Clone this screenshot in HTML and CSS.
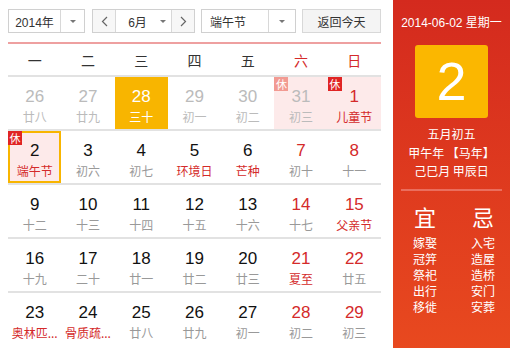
FILE: index.html
```html
<!DOCTYPE html>
<html lang="zh-CN">
<head>
    <meta charset="UTF-8">
    <title>万年历</title>
    <link rel="stylesheet" href="styles.css">
</head>
<body>
    <div class="calendar">
        <div class="main">
            <div class="toolbar">
                <div class="select year">
                    <span class="value">2014年</span>
                    <span class="drop"><i class="caret"></i></span>
                </div>
                <div class="select month">
                    <span class="nav"><svg width="7" height="11" viewBox="0 0 7 11"><path d="M6 1 L1.5 5.5 L6 10" fill="none" stroke="#666" stroke-width="1.2"/></svg></span>
                    <span class="value">6月</span>
                    <span class="drop"><i class="caret"></i></span>
                    <span class="nav"><svg width="7" height="11" viewBox="0 0 7 11"><path d="M1 1 L5.5 5.5 L1 10" fill="none" stroke="#666" stroke-width="1.2"/></svg></span>
                </div>
                <div class="select holiday">
                    <span class="value">端午节</span>
                    <span class="drop"><i class="caret"></i></span>
                </div>
                <div class="btn-today">返回今天</div>
            </div>

            <div class="weekdays">
                <span>一</span><span>二</span><span>三</span><span>四</span><span>五</span>
                <span class="weekend">六</span><span class="weekend">日</span>
            </div>

            <div class="week">
                <div class="day other"><b>26</b><em>廿八</em></div>
                <div class="day other"><b>27</b><em>廿九</em></div>
                <div class="day other today"><b>28</b><em>三十</em></div>
                <div class="day other"><b>29</b><em>初一</em></div>
                <div class="day other"><b>30</b><em>初二</em></div>
                <div class="day other rest"><i class="badge">休</i><b>31</b><em>初三</em></div>
                <div class="day rest weekend"><i class="badge">休</i><b>1</b><em class="fest">儿童节</em></div>
            </div>
            <div class="week">
                <div class="day rest selected"><i class="badge">休</i><b>2</b><em class="fest">端午节</em></div>
                <div class="day"><b>3</b><em>初六</em></div>
                <div class="day"><b>4</b><em>初七</em></div>
                <div class="day"><b>5</b><em class="fest">环境日</em></div>
                <div class="day"><b>6</b><em class="fest">芒种</em></div>
                <div class="day weekend"><b>7</b><em>初十</em></div>
                <div class="day weekend"><b>8</b><em>十一</em></div>
            </div>
            <div class="week">
                <div class="day"><b>9</b><em>十二</em></div>
                <div class="day"><b>10</b><em>十三</em></div>
                <div class="day"><b>11</b><em>十四</em></div>
                <div class="day"><b>12</b><em>十五</em></div>
                <div class="day"><b>13</b><em>十六</em></div>
                <div class="day weekend"><b>14</b><em>十七</em></div>
                <div class="day weekend"><b>15</b><em class="fest">父亲节</em></div>
            </div>
            <div class="week">
                <div class="day"><b>16</b><em>十九</em></div>
                <div class="day"><b>17</b><em>二十</em></div>
                <div class="day"><b>18</b><em>廿一</em></div>
                <div class="day"><b>19</b><em>廿二</em></div>
                <div class="day"><b>20</b><em>廿三</em></div>
                <div class="day weekend"><b>21</b><em class="fest">夏至</em></div>
                <div class="day weekend"><b>22</b><em>廿五</em></div>
            </div>
            <div class="week last">
                <div class="day"><b>23</b><em class="fest">奥林匹...</em></div>
                <div class="day"><b>24</b><em class="fest">骨质疏...</em></div>
                <div class="day"><b>25</b><em>廿八</em></div>
                <div class="day"><b>26</b><em>廿九</em></div>
                <div class="day"><b>27</b><em>初一</em></div>
                <div class="day weekend"><b>28</b><em>初二</em></div>
                <div class="day weekend"><b>29</b><em>初三</em></div>
            </div>
        </div>

        <div class="side">
            <div class="side-date">2014-06-02 星期一</div>
            <div class="big-day">2</div>
            <div class="lunar">
                <p>五月初五</p>
                <p>甲午年 【马年】</p>
                <p>己巳月 甲辰日</p>
            </div>
            <div class="almanac">
                <div class="col">
                    <div class="head">宜</div>
                    <p>嫁娶</p><p>冠笄</p><p>祭祀</p><p>出行</p><p>移徙</p>
                </div>
                <div class="col">
                    <div class="head">忌</div>
                    <p>入宅</p><p>造屋</p><p>造桥</p><p>安门</p><p>安葬</p>
                </div>
            </div>
        </div>
    </div>
</body>
</html>
```

FILE: styles.css
```css
/* Base */
body {
    margin: 0;
    background: #fff;
    font-family: "Liberation Sans", "Noto Sans CJK SC", sans-serif;
    color: #222;
}
.calendar {
    display: flex;
    width: 510px;
    height: 348px;
    overflow: hidden;
}

/* Left: month grid */
.main {
    width: 373px;
    padding: 9px 0 0 8px;
}
.toolbar {
    display: flex;
    height: 24px;
    padding-bottom: 9px;
    border-bottom: 2px solid #eea0a0;
    font-size: 12px;
}
.select {
    display: flex;
    border: 1px solid #d0d0d0;
    box-sizing: border-box;
    height: 24px;
    background: #fff;
}
.select span {
    display: flex;
    align-items: center;
    justify-content: center;
}
.select .value {
    flex: 1;
    color: #333;
}
.select .drop {
    width: 23px;
    border-left: 1px solid #d8d8d8;
}
.caret {
    width: 0;
    height: 0;
    border-left: 3px solid transparent;
    border-right: 3px solid transparent;
    border-top: 3px solid #777;
}
.year {
    width: 77px;
}
.month {
    width: 103px;
    margin-left: 7px;
}
.month .value {
    padding-left: 4px;
}
.month .drop {
    border-left: none;
    width: 16px;
}
.month .nav {
    width: 22px;
    background: #f7f7f7;
}
.month .nav:first-child {
    border-right: 1px solid #d8d8d8;
}
.month .nav:last-child {
    border-left: 1px solid #d8d8d8;
}
.holiday {
    width: 95px;
    margin-left: 6px;
}
.holiday .value {
    justify-content: flex-start;
    padding-left: 8px;
}
.holiday .drop {
    width: 26px;
}
.btn-today {
    width: 79px;
    height: 24px;
    margin-left: 6px;
    box-sizing: border-box;
    border: 1px solid #d8d8d8;
    background: #f4f4f4;
    display: flex;
    align-items: center;
    justify-content: center;
    color: #333;
}

.weekdays {
    display: grid;
    grid-template-columns: repeat(7, 1fr);
    height: 31px;
    align-items: center;
    border-bottom: 2px solid #e2e2e2;
    font-family: "Noto Sans CJK SC", sans-serif;
    font-size: 14px;
    text-align: center;
    color: #333;
}
.weekdays .weekend {
    color: #d42a2a;
}

.week {
    display: grid;
    grid-template-columns: repeat(7, 1fr);
    height: 52px;
    border-bottom: 2px solid #e2e2e2;
}
.week.last {
    border-bottom: none;
}
.day {
    position: relative;
    text-align: center;
    box-sizing: border-box;
    padding-top: 10px;
}
.day b {
    display: block;
    font-weight: normal;
    font-size: 17px;
    line-height: 20px;
    color: #111;
}
.day em {
    display: block;
    font-style: normal;
    font-family: "Noto Sans CJK SC", sans-serif;
    font-size: 12px;
    line-height: 16px;
    margin-top: 2px;
    color: #999;
    white-space: nowrap;
}
.day em.fest {
    color: #d42a2a;
}
.day.weekend b {
    color: #d42a2a;
}
.day.other b {
    color: #bbb;
}
.day.other em {
    color: #bbb;
}
.day.rest {
    background: #fdeaea;
}
.day.today {
    background: #f8b500;
}
.day.today b,
.day.today em {
    color: #fff;
}
.day.selected {
    border: 2px solid #f8b500;
    padding-top: 8px;
}
.badge {
    position: absolute;
    top: 0;
    left: 0;
    width: 14px;
    height: 14px;
    background: #e02424;
    color: #fff;
    font-style: normal;
    font-family: "Noto Sans CJK SC", sans-serif;
    font-size: 11px;
    line-height: 14px;
    text-align: center;
}
.day.other .badge {
    background: #f29a92;
}
.day.selected .badge {
    top: -2px;
    left: -2px;
}

/* Right: day detail */
.side {
    width: 117px;
    margin-left: 12px;
    background: linear-gradient(to bottom, #d42a1e, #e8491f);
    color: #fff;
    text-align: center;
    font-family: "Noto Sans CJK SC", sans-serif;
}
.side-date {
    font-family: "Liberation Sans", "Noto Sans CJK SC", sans-serif;
    font-size: 12px;
    margin-top: 15px;
    line-height: 16px;
}
.big-day {
    width: 73px;
    height: 73px;
    margin: 14px auto 0;
    background: #fbb700;
    border-radius: 3px;
    font-family: "Liberation Sans", sans-serif;
    font-size: 54px;
    line-height: 73px;
}
.lunar {
    margin: 7px 8px 0;
    padding-bottom: 8px;
    border-bottom: 2px solid #ea6e5e;
    font-size: 12px;
    line-height: 18.5px;
}
.lunar p,
.almanac p {
    margin: 0;
}
.almanac {
    display: flex;
    justify-content: space-between;
    padding: 0 15px 0 20px;
}
.almanac .col {
    width: 24px;
    display: flex;
    flex-direction: column;
    align-items: center;
}
.almanac .head {
    font-size: 22px;
    line-height: 30px;
    margin: 10px 0 4px;
}
.almanac p {
    font-size: 12px;
    line-height: 16px;
}
```
